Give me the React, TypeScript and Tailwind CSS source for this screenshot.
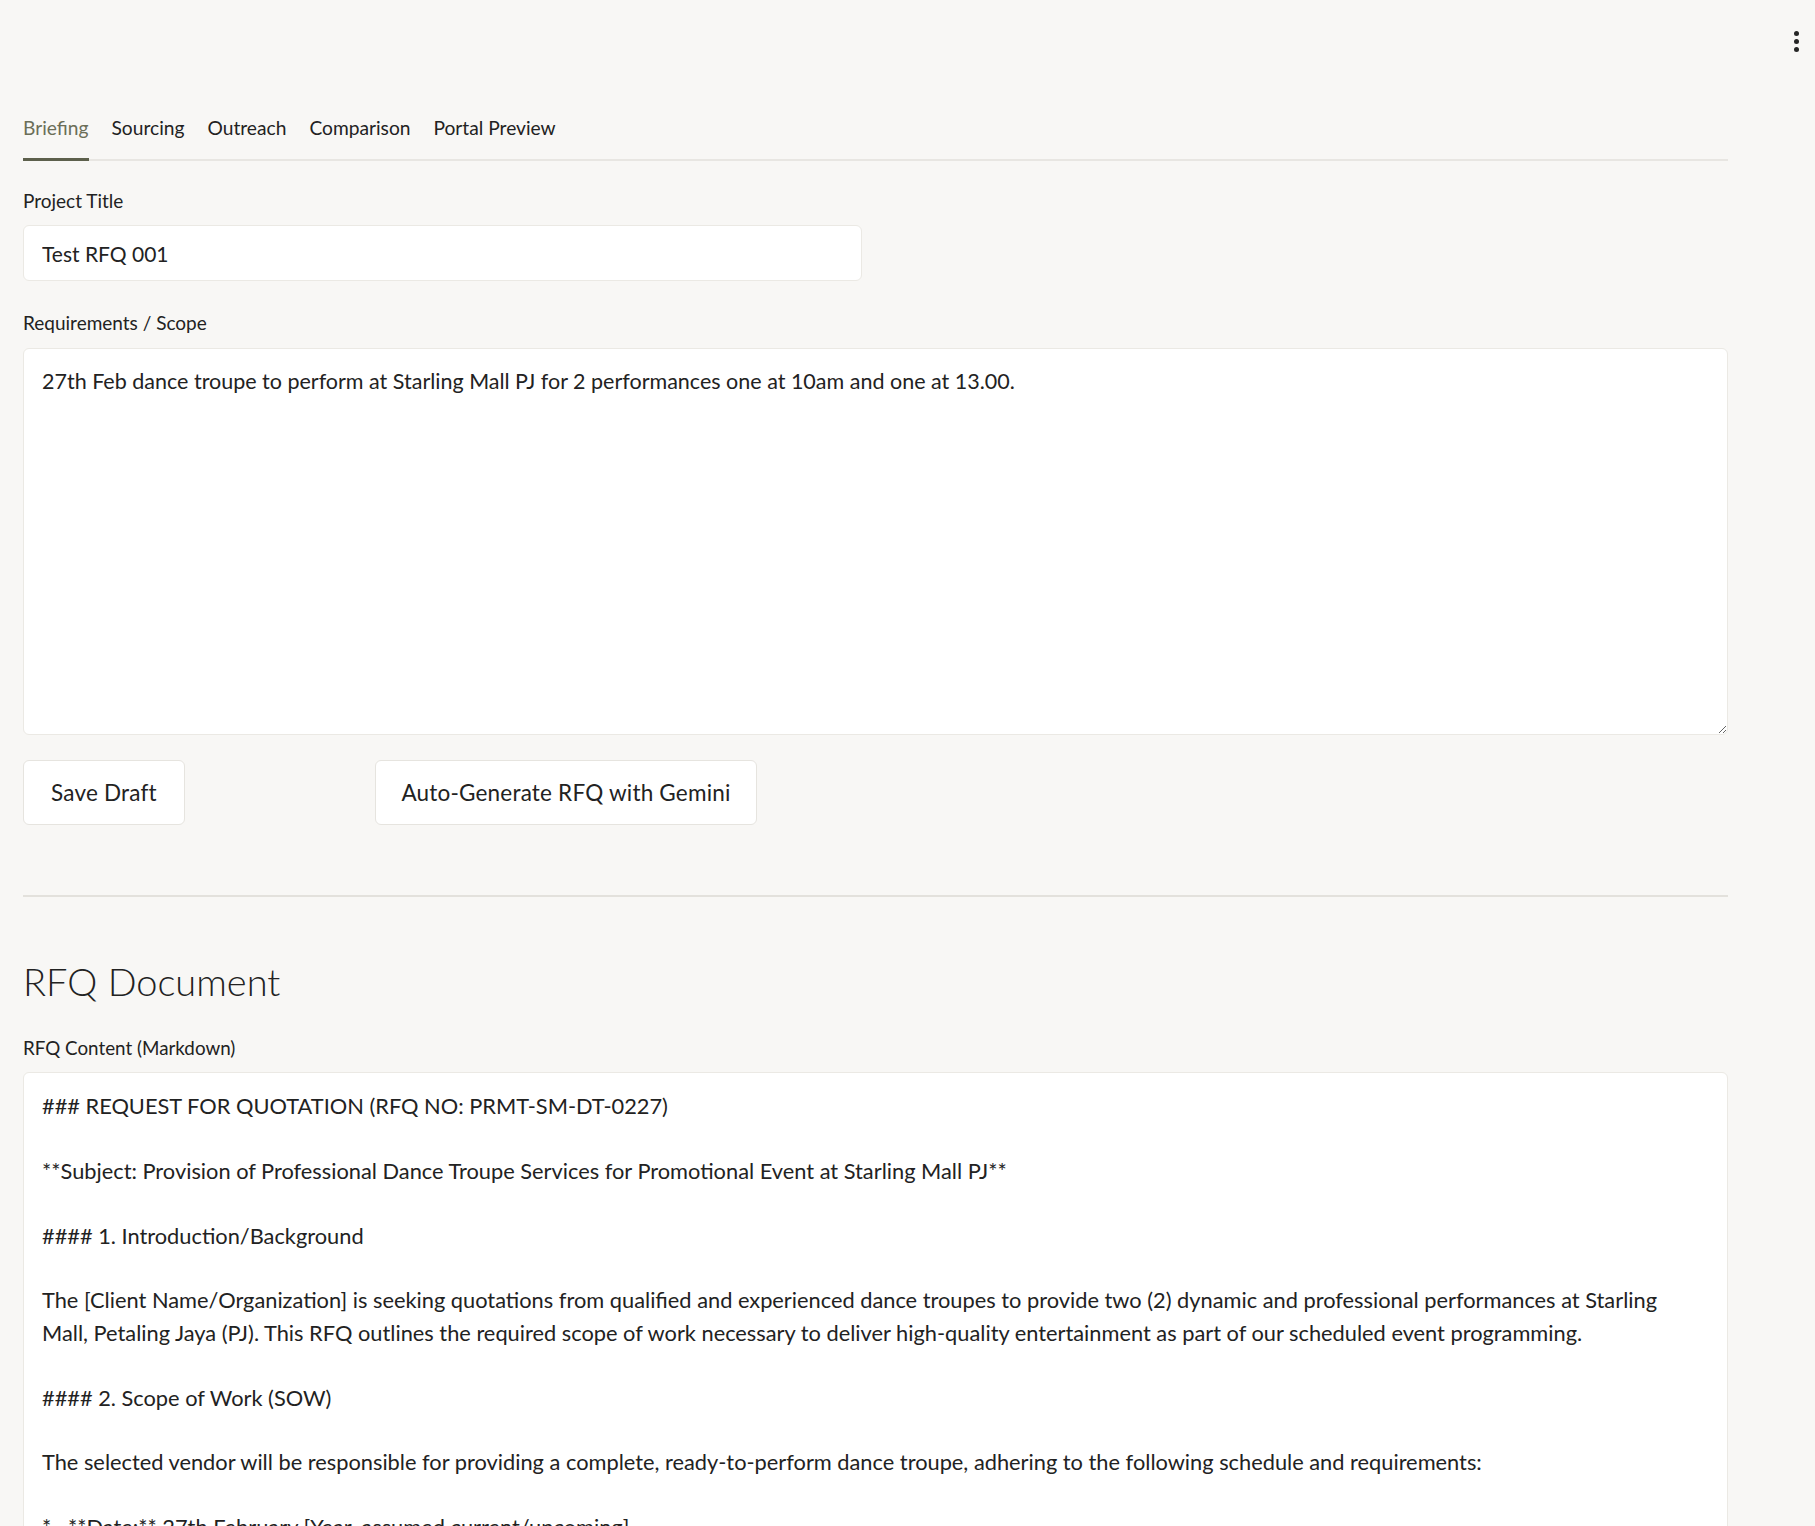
import { useState } from 'react';

const tabs = ['Briefing', 'Sourcing', 'Outreach', 'Comparison', 'Portal Preview'];

const rfqText = [
  '### REQUEST FOR QUOTATION (RFQ NO: PRMT-SM-DT-0227)',
  '',
  '**Subject: Provision of Professional Dance Troupe Services for Promotional Event at Starling Mall PJ**',
  '',
  '#### 1. Introduction/Background',
  '',
  'The [Client Name/Organization] is seeking quotations from qualified and experienced dance troupes to provide two (2) dynamic and professional performances at Starling',
  'Mall, Petaling Jaya (PJ). This RFQ outlines the required scope of work necessary to deliver high-quality entertainment as part of our scheduled event programming.',
  '',
  '#### 2. Scope of Work (SOW)',
  '',
  'The selected vendor will be responsible for providing a complete, ready-to-perform dance troupe, adhering to the following schedule and requirements:',
  '',
  '*   **Date:** 27th February [Year, assumed current/upcoming]',
  '*   **Venue:** Starling Mall, Petaling Jaya (PJ)',
].join('\n');

export default function App() {
  const [active, setActive] = useState(0);
  const [title, setTitle] = useState('Test RFQ 001');
  const [scope, setScope] = useState(
    '27th Feb dance troupe to perform at Starling Mall PJ for 2 performances one at 10am and one at 13.00.'
  );
  const [rfq, setRfq] = useState(rfqText);

  return (
    <main className="min-h-screen bg-[#f8f7f5] text-[#222222] font-['Lato','Liberation_Sans',sans-serif]">
      <header className="h-[82px] flex items-start justify-end pt-[30px] pr-[14px]">
        <button className="flex flex-col gap-[3px] px-[2px] py-[1px]" aria-label="menu">
          <span className="w-[5px] h-[5px] rounded-full bg-[#262626]" />
          <span className="w-[5px] h-[5px] rounded-full bg-[#262626]" />
          <span className="w-[5px] h-[5px] rounded-full bg-[#262626]" />
        </button>
      </header>

      <div className="w-[1705px] ml-[23px]">
        <nav className="flex gap-[23px] border-b-2 border-[#e8e6e2] mt-[32px]">
          {tabs.map((t, i) => (
            <button
              key={t}
              onClick={() => setActive(i)}
              className={`text-[19.2px] leading-[28px] pb-[16px] -mb-[2px] border-b-[3px] ${
                i === active ? 'text-[#6b6e58] border-[#5d604c]' : 'text-[#222222] border-transparent'
              }`}
            >
              {t}
            </button>
          ))}
        </nav>

        <label className="block text-[19px] leading-[24px] mt-[28px]">Project Title</label>
        <input
          value={title}
          onChange={e => setTitle(e.target.value)}
          className="mt-[12px] block w-[839px] h-[56px] bg-white border border-[#ebe9e4] rounded-[6px] px-[18px] text-[21px] outline-none"
        />

        <label className="block text-[19px] leading-[24px] mt-[30px]">Requirements / Scope</label>
        <textarea
          value={scope}
          onChange={e => setScope(e.target.value)}
          className="mt-[13px] block w-full h-[387px] bg-white border border-[#ebe9e4] rounded-[6px] px-[18px] py-[16px] text-[21.5px] leading-[32px] outline-none resize-y"
        />

        <div className="flex mt-[25px]">
          <button className="h-[65px] w-[162px] bg-white border border-[#e6e4df] rounded-[6px] text-[22.5px] tracking-[0.2px]">
            Save Draft
          </button>
          <button className="ml-[190px] h-[65px] w-[382px] bg-white border border-[#e6e4df] rounded-[6px] text-[22.5px] tracking-[0.2px]">
            Auto-Generate RFQ with Gemini
          </button>
        </div>

        <hr className="mt-[70px] border-t-2 border-[#e3e1dc]" />

        <h2 className="mt-[56px] text-[38px] leading-[56px] font-light">RFQ Document</h2>

        <label className="block text-[18.8px] leading-[24px] mt-[27px]">RFQ Content (Markdown)</label>
        <textarea
          value={rfq}
          onChange={e => setRfq(e.target.value)}
          wrap="off"
          className="mt-[12px] block w-full h-[620px] bg-white border border-[#ebe9e4] rounded-[6px] px-[18px] pt-[17px] pb-[16px] text-[21.8px] leading-[32.4px] outline-none resize-y overflow-hidden"
        />
      </div>
    </main>
  );
}
